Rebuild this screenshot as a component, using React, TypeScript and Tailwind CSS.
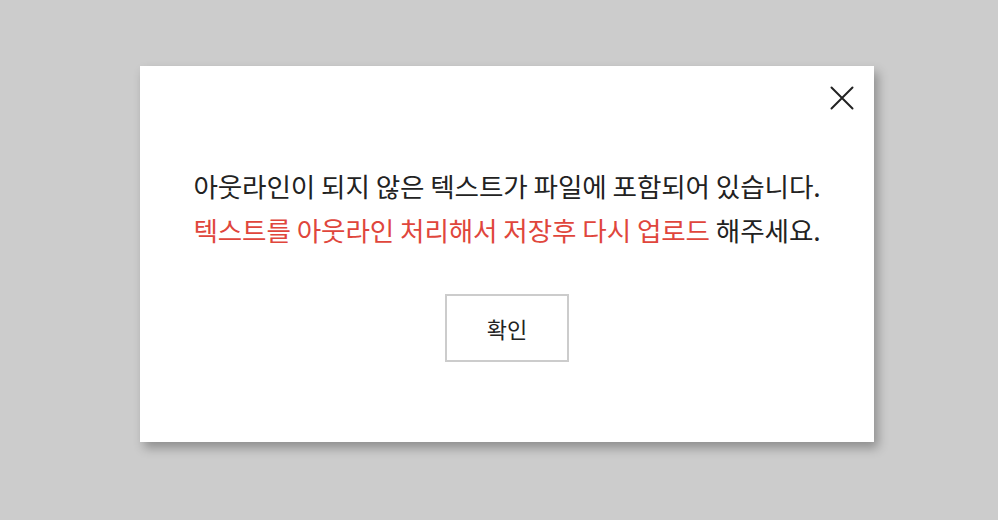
export default function App() {
  return (
    <div className="w-[998px] h-[520px] bg-[#cccccc] flex items-start pl-[140px] pt-[66px] font-['Noto_Sans_CJK_KR','Noto_Sans',sans-serif]">
      <div className="relative w-[734px] h-[376px] bg-white shadow-[4px_6px_10px_rgba(0,0,0,0.3)] flex flex-col items-center pt-[98px]">
        <button className="absolute right-[20px] top-[20px] w-[24px] h-[24px] flex items-center justify-center">
          <svg width="24" height="24" viewBox="0 0 24 24" fill="none" stroke="#222" strokeWidth="2" strokeLinecap="round">
            <path d="M1.5 1.5L22.5 22.5M22.5 1.5L1.5 22.5" />
          </svg>
        </button>
        <p className="text-[26.6px] leading-[44px] text-[#222] tracking-[-0.1px] text-center">
          아웃라인이 되지 않은 텍스트가 파일에 포함되어 있습니다.
          <br />
          <span className="text-[#e0463c]">텍스트를 아웃라인 처리해서 저장후 다시 업로드</span> 해주세요.
        </p>
        <button className="mt-[42px] w-[124px] h-[68px] border-2 border-[#cccccc] bg-white text-[22px] text-[#222]">
          확인
        </button>
      </div>
    </div>
  )
}
